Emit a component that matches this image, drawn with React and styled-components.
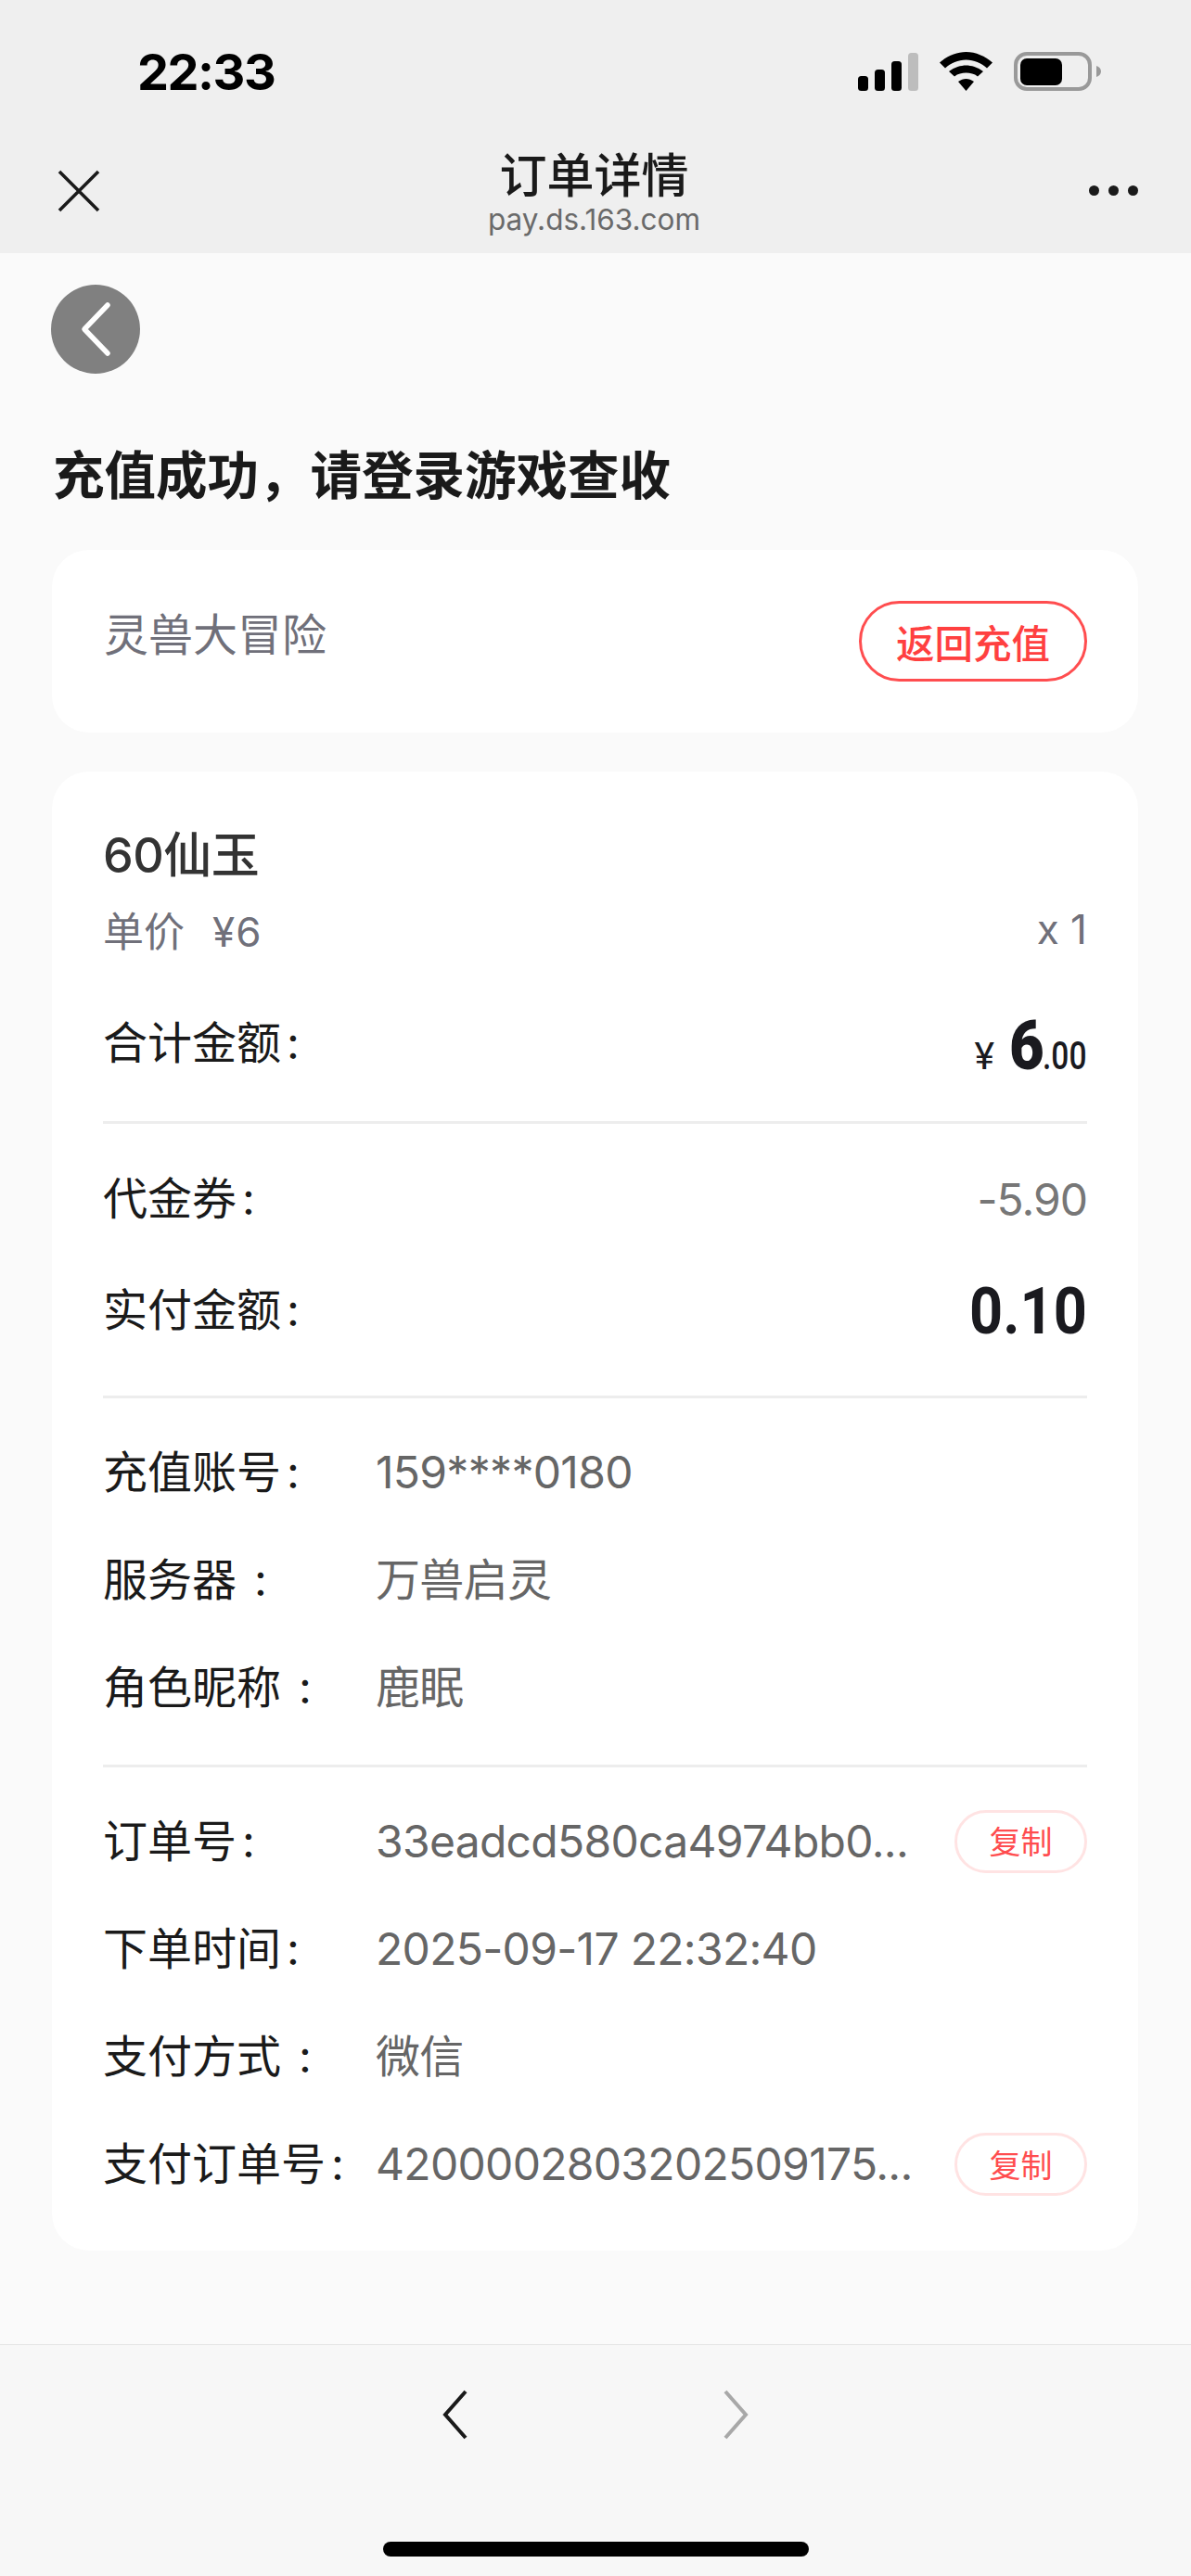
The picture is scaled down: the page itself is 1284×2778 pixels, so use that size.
import React from 'react';
import styled, { createGlobalStyle } from 'styled-components';

const FONT = 'Inter, "Noto Sans CJK SC", sans-serif';

const GlobalStyle = createGlobalStyle`
  html, body {
    margin: 0;
    padding: 0;
    background: #fafafa;
  }
  * {
    box-sizing: border-box;
  }
`;

const Page = styled.div`
  width: 1284px;
  height: 2778px;
  display: flex;
  flex-direction: column;
  overflow: hidden;
  background: #fafafa;
  font-family: ${FONT};
`;

const Header = styled.header`
  height: 273px;
  background: #efefef;
`;

const StatusBar = styled.div`
  height: 130px;
  padding: 24px 97px 0 148px;
  display: flex;
  align-items: center;
  justify-content: space-between;
`;

const Time = styled.span`
  font-size: 54px;
  font-weight: 700;
  color: #000;
  letter-spacing: -1.5px;
`;

const StatusIcons = styled.div`
  display: flex;
  align-items: center;
  gap: 23px;
`;

const NavBar = styled.div`
  height: 143px;
  padding: 8px 57px 0 62px;
  display: grid;
  grid-template-columns: 92px 1fr 100px;
  align-items: center;
`;

const NavTitle = styled.div`
  display: flex;
  flex-direction: column;
  align-items: center;
`;

const TitleText = styled.div`
  font-size: 51px;
  line-height: 62px;
  font-weight: 500;
  color: #1a1a1a;
`;

const TitleHost = styled.div`
  font-size: 31.5px;
  line-height: 32px;
  color: #6a6a6a;
`;

const MoreDots = styled.div`
  justify-self: end;
  display: flex;
  gap: 10px;
`;

const Dot = styled.span`
  width: 11px;
  height: 11px;
  border-radius: 50%;
  background: #1a1a1a;
`;

const Content = styled.main`
  padding: 34px 57px 0 56px;
`;

const BackCircle = styled.div`
  width: 96px;
  height: 96px;
  margin-left: -1px;
  border-radius: 50%;
  background: #808080;
  display: flex;
  align-items: center;
  justify-content: center;
`;

const Heading = styled.h1`
  margin: 70px 0 40px;
  padding-left: 1px;
  font-size: 55.5px;
  line-height: 80px;
  font-weight: 700;
  color: #1a1a1a;
`;

const Card = styled.section`
  background: #fff;
  border-radius: 40px;
  margin-top: ${(p) => p.$top || 0}px;
  padding: ${(p) => p.$padding};
`;

const GameRow = styled.div`
  display: flex;
  justify-content: space-between;
  align-items: flex-start;
  height: 197px;
  padding-top: 55px;
`;

const GameName = styled.div`
  font-size: 48px;
  line-height: 74px;
  color: #70707a;
`;

const ReturnButton = styled.div`
  width: 246px;
  height: 87px;
  border: 3px solid #ff4d4f;
  border-radius: 44px;
  display: flex;
  align-items: center;
  justify-content: center;
  font-size: 41.5px;
  font-weight: 500;
  color: #ff4040;
`;

const ProductName = styled.div`
  font-size: 52px;
  line-height: 70px;
  font-weight: 500;
  color: #333;
  letter-spacing: -0.5px;
`;

const UnitRow = styled.div`
  margin-top: 14px;
  height: 60px;
  display: flex;
  justify-content: space-between;
  align-items: center;
  font-size: 44px;
  color: #70707a;
`;

const UnitPrice = styled.span`
  margin-left: 30px;
  letter-spacing: 1px;
`;

const AmountRow = styled.div`
  margin-top: ${(p) => p.$top}px;
  height: 80px;
  display: flex;
  justify-content: space-between;
  align-items: center;
`;

const Label = styled.div`
  font-size: 48px;
  line-height: 80px;
  color: #1a1a1a;
  white-space: nowrap;
`;

const Colon = styled.span`
  margin-left: ${(p) => p.$gap}px;
`;

const TotalPrice = styled.div`
  display: flex;
  align-items: baseline;
  padding-top: 4px;
  color: #1a1a1f;
  font-family: Roboto, sans-serif;
`;

const TotalCurrency = styled.span`
  font-size: 41px;
  margin-right: 16px;
`;

const TotalMain = styled.span`
  display: inline-block;
  width: 36px;
  font-size: 74px;
  font-weight: 900;
  transform: scaleX(0.88);
  transform-origin: left;
`;

const TotalCents = styled.span`
  display: inline-block;
  font-size: 43px;
  font-weight: 500;
  width: 48px;
  transform: scaleX(0.78);
  transform-origin: left;
  white-space: nowrap;
`;

const Voucher = styled.div`
  font-size: 48px;
  letter-spacing: -1px;
  color: #777;
`;

const PaidAmount = styled.div`
  padding-top: 2px;
  font-family: Roboto, sans-serif;
  font-size: 70px;
  font-weight: 700;
  color: #1a1a1f;
  transform: scaleX(0.9);
  transform-origin: right;
`;

const Divider = styled.div`
  height: 3px;
  background: #ededed;
  margin: ${(p) => p.$margin};
`;

const InfoRow = styled.div`
  height: 116.2px;
  display: grid;
  grid-template-columns: 294px 1fr auto;
  align-items: center;
`;

const Value = styled.div`
  font-size: 48px;
  line-height: 80px;
  letter-spacing: -0.7px;
  color: #666;
  white-space: nowrap;
`;

const CopyButton = styled.div`
  width: 143px;
  height: 68px;
  padding-bottom: 2px;
  border: 3px solid #ffe3e3;
  border-radius: 34px;
  display: flex;
  align-items: center;
  justify-content: center;
  font-size: 34px;
  color: #ff4d4f;
`;

const BottomBar = styled.footer`
  margin-top: auto;
  height: 250px;
  background: #f7f7f7;
  border-top: 1px solid #e4e4e4;
  display: flex;
  flex-direction: column;
  align-items: center;
`;

const BrowserNav = styled.div`
  width: 330px;
  margin-top: 48px;
  display: flex;
  justify-content: space-between;
`;

const HomeIndicator = styled.div`
  width: 459px;
  height: 16px;
  margin-top: 110px;
  border-radius: 8px;
  background: #000;
`;

const SignalIcon = () => (
  <svg width="65" height="41" viewBox="0 0 65 41">
    <rect x="0" y="25" width="11" height="16" rx="3.5" fill="#000" />
    <rect x="18" y="18" width="11" height="23" rx="3.5" fill="#000" />
    <rect x="36" y="9" width="11" height="32" rx="3.5" fill="#000" />
    <rect x="54" y="0" width="11" height="41" rx="3.5" fill="#bdbdbd" />
  </svg>
);

const WifiIcon = () => (
  <svg width="57" height="42" viewBox="0 0 57 42">
    <path d="M28.5 0C39 0 49 4.5 57 11.5L51 17.5C45 12 37 8.5 28.5 8.5C20 8.5 12 12 6 17.5L0 11.5C8 4.5 18 0 28.5 0Z" fill="#000" />
    <path d="M28.5 14.5C34 14.5 41 16.5 47 21L41 26.5C37.5 23.5 33 22.5 28.5 22.5C24 22.5 19.5 23.5 16 26.5L10 21C16 16.5 23 14.5 28.5 14.5Z" fill="#000" />
    <path d="M28.5 29C31.5 29 34 30 37 32L28.5 42L20 32C23 30 25.5 29 28.5 29Z" fill="#000" />
  </svg>
);

const BatteryIcon = () => (
  <svg width="94" height="42" viewBox="0 0 94 42">
    <rect x="2" y="2" width="80" height="38" rx="12" fill="none" stroke="#999" strokeWidth="4" />
    <rect x="7" y="7" width="45" height="29" rx="7" fill="#000" />
    <path d="M89 15C92 16 94 18 94 21C94 24 92 26 89 27Z" fill="#999" />
  </svg>
);

const CloseIcon = () => (
  <svg width="46" height="46" viewBox="0 0 46 46">
    <path d="M2 2L44 44M44 2L2 44" stroke="#1a1a1a" strokeWidth="3.6" fill="none" />
  </svg>
);

const BackChevron = () => (
  <svg width="36" height="60" viewBox="0 0 36 60">
    <path d="M31 4L6 30L31 56" stroke="#fff" strokeWidth="5.5" strokeLinecap="round" strokeLinejoin="round" fill="none" />
  </svg>
);

const NavChevron = ({ color, flip }) => (
  <svg width="28" height="54" viewBox="0 0 28 54" style={flip ? { transform: 'scaleX(-1)' } : undefined}>
    <path d="M25 2L3 27L25 52" stroke={color} strokeWidth="4" fill="none" />
  </svg>
);

const Info = ({ label, gap, children, copy }) => (
  <InfoRow>
    <Label>
      {label}
      <Colon $gap={gap}>:</Colon>
    </Label>
    <Value>{children}</Value>
    {copy && <CopyButton>复制</CopyButton>}
  </InfoRow>
);

const App = () => (
  <Page>
    <GlobalStyle />
    <Header>
      <StatusBar>
        <Time>22:33</Time>
        <StatusIcons>
          <SignalIcon />
          <WifiIcon />
          <BatteryIcon />
        </StatusIcons>
      </StatusBar>
      <NavBar>
        <CloseIcon />
        <NavTitle>
          <TitleText>订单详情</TitleText>
          <TitleHost>pay.ds.163.com</TitleHost>
        </NavTitle>
        <MoreDots>
          <Dot />
          <Dot />
          <Dot />
        </MoreDots>
      </NavBar>
    </Header>

    <Content>
      <BackCircle>
        <BackChevron />
      </BackCircle>
      <Heading>充值成功，请登录游戏查收</Heading>

      <Card $padding="0 55px 0 56px">
        <GameRow>
          <GameName>灵兽大冒险</GameName>
          <ReturnButton>返回充值</ReturnButton>
        </GameRow>
      </Card>

      <Card $top={42} $padding="56px 55px 35px 55px">
        <ProductName>60仙玉</ProductName>
        <UnitRow>
          <span>
            单价<UnitPrice>¥6</UnitPrice>
          </span>
          <span>x 1</span>
        </UnitRow>
        <AmountRow $top={53}>
          <Label>
            合计金额<Colon $gap={6}>:</Colon>
          </Label>
          <TotalPrice>
            <TotalCurrency>¥</TotalCurrency>
            <TotalMain>6</TotalMain>
            <TotalCents>.00</TotalCents>
          </TotalPrice>
        </AmountRow>
        <Divider $margin="44px 0 41px" />
        <AmountRow $top={0}>
          <Label>
            代金券<Colon $gap={6}>:</Colon>
          </Label>
          <Voucher>-5.90</Voucher>
        </AmountRow>
        <AmountRow $top={40}>
          <Label>
            实付金额<Colon $gap={6}>:</Colon>
          </Label>
          <PaidAmount>0.10</PaidAmount>
        </AmountRow>
        <Divider $margin="52px 0 22px" />
        <Info label="充值账号" gap={6}>159****0180</Info>
        <Info label="服务器" gap={19}>万兽启灵</Info>
        <Info label="角色昵称" gap={19}>鹿眠</Info>
        <Divider $margin="24px 0 22px" />
        <Info label="订单号" gap={6} copy>33eadcd580ca4974bb0...</Info>
        <Info label="下单时间" gap={6}>2025-09-17 22:32:40</Info>
        <Info label="支付方式" gap={19}>微信</Info>
        <Info label="支付订单号" gap={6} copy>4200002803202509175...</Info>
      </Card>
    </Content>

    <BottomBar>
      <BrowserNav>
        <NavChevron color="#1a1a1a" />
        <NavChevron color="#a8a8a8" flip />
      </BrowserNav>
      <HomeIndicator />
    </BottomBar>
  </Page>
);

export default App;
